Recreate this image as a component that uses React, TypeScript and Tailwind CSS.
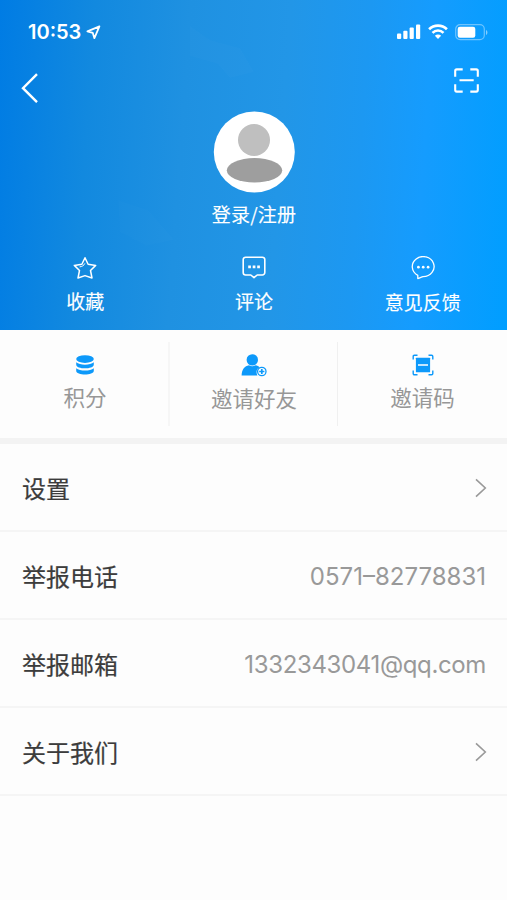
import type { ReactNode } from "react";

function StatusBar() {
  return (
    <div className="flex h-16 items-center pl-[28px] pr-[19px] text-white">
      <span className="font-['Inter',sans-serif] text-[20px] font-semibold leading-6">10:53</span>
      <svg className="ml-[5px]" width="15" height="15" viewBox="0 0 15 15" fill="none">
        <path d="M13.4 1.4 1.4 6.4 6.8 7.9 8.4 13.2Z" stroke="currentColor" strokeWidth="1.8" strokeLinejoin="round" />
      </svg>
      <div className="ml-auto flex items-center">
        <svg width="24" height="16" viewBox="0 0 24 16" fill="currentColor">
          <rect x="0" y="9.6" width="4.2" height="5.4" rx="1" />
          <rect x="6.3" y="6.8" width="4.2" height="8.2" rx="1" />
          <rect x="12.6" y="3.6" width="4.2" height="11.4" rx="1" />
          <rect x="19" y="0.4" width="4.2" height="14.6" rx="1" />
        </svg>
        <svg className="ml-[7px]" width="20" height="16" viewBox="0 0 20 16" fill="none" stroke="currentColor">
          <path d="M1.1 5.2a12.7 12.7 0 0 1 17.8 0" strokeWidth="2.7" />
          <path d="M4.5 8.8a7.8 7.8 0 0 1 11 0" strokeWidth="2.6" />
          <path d="M10 15 6.9 11.8a4.4 4.4 0 0 1 6.2 0Z" fill="currentColor" stroke="none" />
        </svg>
        <svg className="ml-[7px]" width="33" height="17" viewBox="0 0 33 17" fill="none">
          <rect x="0.7" y="0.7" width="28.6" height="15" rx="4.4" stroke="currentColor" strokeOpacity="0.4" strokeWidth="1.2" />
          <rect x="2.7" y="2.7" width="17.6" height="11" rx="2.2" fill="currentColor" />
          <path d="M31 5.9v5c1.9-.8 1.9-4.2 0-5Z" fill="currentColor" fillOpacity="0.5" />
        </svg>
      </div>
    </div>
  );
}

// Faint world-map texture over the header gradient
function HeaderTexture() {
  return (
    <svg className="absolute inset-0" width="507" height="330" viewBox="0 0 507 330" fill="#fff">
      <path d="M190 26l20 14 30 8 14 24-24 6-12-14-28-8Z" fillOpacity="0.015" />
      <path d="M118 200l30 10 26 30-28 6-26-14Z" fillOpacity="0.01" />
    </svg>
  );
}

function StarIcon() {
  return (
    <svg width="24" height="24" viewBox="0 0 24 24" fill="none" stroke="currentColor" strokeWidth="1.5" strokeLinejoin="round">
      <path d="M12 1.7 15.1 8.3 22.7 9.4 17.5 14.5 19 22 12 19.6 5 22 6.5 14.5 1.3 9.4 8.9 8.3Z" />
      <path d="M6.6 10.9c2.4-.3 4.3-1.3 5.3-3.5" strokeWidth="1" />
    </svg>
  );
}

function CommentIcon() {
  return (
    <svg width="24" height="24" viewBox="0 0 24 24" fill="none" stroke="currentColor" strokeWidth="1.6" strokeLinejoin="round">
      <path d="M3.6 1.2h16.8a2.4 2.4 0 0 1 2.4 2.4v13a2.4 2.4 0 0 1-2.4 2.4h-5.2L12 21.6l-3.2-2.6H3.6a2.4 2.4 0 0 1-2.4-2.4v-13a2.4 2.4 0 0 1 2.4-2.4Z" />
      <path d="M6.2 9.500h2.700v2.700H6.200zM10.700 9.500h2.700v2.700h-2.700zM15.200 9.500h2.700v2.700h-2.700z" fill="currentColor" stroke="none" />
    </svg>
  );
}

function FeedbackIcon() {
  return (
    <svg width="24" height="24" viewBox="0 0 24 24" fill="none" stroke="currentColor" strokeWidth="1.3" strokeLinejoin="round">
      <path d="M6.8 22.6V19.3A10.9 10 0 1 1 12 20.6C10.4 21.1 8.8 21.8 6.8 22.6Z" />
      <g fill="currentColor" stroke="none">
        <circle cx="7.4" cy="11.2" r="1.35" />
        <circle cx="12.2" cy="11.2" r="1.35" />
        <circle cx="17.1" cy="11.2" r="1.35" />
      </g>
    </svg>
  );
}

function CoinsIcon() {
  return (
    <svg width="18" height="20" viewBox="0 0 18 20" fill="currentColor">
      <ellipse cx="9" cy="4.1" rx="8.8" ry="3.9" />
      <path d="M.2 7.3C3.8 10.4 14.2 10.4 17.8 7.3v2.1c0 5.2-17.6 5.2-17.6 0Z" />
      <path d="M.2 13.2C3.8 16.3 14.2 16.3 17.8 13.2v2.5c0 5.1-17.6 5.1-17.6 0Z" />
    </svg>
  );
}

function InviteIcon() {
  return (
    <svg width="26" height="23" viewBox="0 0 26 23">
      <circle cx="11.3" cy="5.9" r="5.7" fill="currentColor" />
      <path d="M.6 21.5C.9 15.3 3.6 12.2 8 11.3c1.8 1.4 4.6 1.4 6.5 0 1.8.4 3.1 1 4 2-3.2 1.8-3.6 5-2.1 8.2Z" fill="currentColor" />
      <circle cx="20.8" cy="17.5" r="4.2" fill="#fff" stroke="currentColor" strokeWidth="1.3" />
      <path d="M20.8 14.9v5.2M18.2 17.5h5.2" stroke="currentColor" strokeWidth="1.7" />
    </svg>
  );
}

function CodeIcon() {
  return (
    <svg width="22" height="22" viewBox="0 0 22 22" fill="none" stroke="currentColor" strokeWidth="1.4">
      <path d="M1.2 5.5V2.4Q1.2 1.2 2.4 1.2H5.5M16.5 1.2h3.1q1.2 0 1.2 1.2v3.1M20.8 16.5v3.1q0 1.2-1.2 1.2h-3.1M5.5 20.8H2.4q-1.2 0-1.2-1.2v-3.1" />
      <rect x="3.9" y="3.7" width="14.2" height="14.6" rx="0.6" fill="currentColor" stroke="none" />
      <path d="M6 11h10" stroke="#fff" strokeWidth="1.5" />
    </svg>
  );
}

function Chevron() {
  return (
    <svg className="mt-[2px]" width="12" height="20" viewBox="0 0 12 20" fill="none" stroke="#999" strokeWidth="1.6">
      <path d="M1 1.3 10.3 10 1 18.7" />
    </svg>
  );
}

function Shortcut({ icon, label, labelClass = "mt-[9px]" }: { icon: ReactNode; label: string; labelClass?: string }) {
  return (
    <div className="flex flex-1 flex-col items-center">
      <div className="flex h-6">{icon}</div>
      <span className={`text-[19px] leading-6 [-webkit-text-stroke:0.15px] ${labelClass}`}>{label}</span>
    </div>
  );
}

function Tab({ icon, label, labelClass = "mt-0" }: { icon: ReactNode; label: string; labelClass?: string }) {
  return (
    <div className="flex flex-1 flex-col items-center pt-[8px]">
      <div className="flex h-[30px] items-center text-[#0d99fa]">{icon}</div>
      <span className={`text-[21.5px] leading-[34px] text-[#979797] ${labelClass}`}>{label}</span>
    </div>
  );
}

function Row({ label, value, valueClass = "" }: { label: string; value?: string; valueClass?: string }) {
  return (
    <div className="flex h-[88px] items-center justify-between border-b-2 border-[#f5f5f5] pl-[22px] pr-[20px]">
      <span className="pt-px text-[24px] leading-8 text-[#3c3c3c] [-webkit-text-stroke:0.2px]">{label}</span>
      {value ? (
        <span className={`pr-px pt-[4px] font-['Inter',sans-serif] text-[24px] leading-8 text-[#999] ${valueClass}`}>{value}</span>
      ) : (
        <Chevron />
      )}
    </div>
  );
}

export default function App() {
  return (
    <div className="h-[900px] w-[507px] overflow-hidden bg-[#fdfdfd] font-['Noto_Sans_CJK_SC',sans-serif]">
      <header className="relative h-[330px] bg-[linear-gradient(94deg,#007ce4_0%,#1289df_18%,#1f91e1_36%,#2296e7_55%,#1c98f2_70%,#159cfe_82%,#009eff_100%)]">
        <HeaderTexture />
        <div className="relative text-white">
          <StatusBar />
          <div className="flex h-[47px] items-start justify-between pl-[21px] pr-[27px]">
            <svg className="mt-[9px]" width="18" height="30" viewBox="0 0 18 30" fill="none" stroke="currentColor" strokeWidth="2.4">
              <path d="M16 1.2 2 15.2 16 29.2" />
            </svg>
            <svg className="mt-[3px]" width="27" height="27" viewBox="0 0 27 27" fill="none" stroke="currentColor" strokeWidth="2.1">
              <path d="M2.2 9.8V3.9q0-1.5 1.5-1.5h6M17.3 2.4h6q1.5 0 1.5 1.5v5.9M24.8 17.2v5.9q0 1.5-1.5 1.5h-6M9.7 24.6h-6q-1.5 0-1.5-1.5v-5.9M6.5 13.2h14.2" />
            </svg>
          </div>
          <div className="flex flex-col items-center">
            <svg width="82" height="82" viewBox="0 0 82 82">
              <circle cx="41.3" cy="41" r="40.5" fill="#fff" />
              <circle cx="41" cy="29" r="16" fill="#bfbfbf" />
              <ellipse cx="41.5" cy="59.3" rx="27.7" ry="12.2" fill="#9e9e9e" />
            </svg>
            <span className="mt-[9px] pl-px text-[19px] leading-6 tracking-[0.2px] [-webkit-text-stroke:0.15px]">登录/注册</span>
          </div>
          <div className="mt-[30px] flex pl-px">
            <Shortcut icon={<StarIcon />} label="收藏" />
            <Shortcut icon={<CommentIcon />} label="评论" />
            <Shortcut icon={<FeedbackIcon />} label="意见反馈" labelClass="mt-[10px]" />
          </div>
        </div>
      </header>

      <section className="flex h-[108px] py-[12px]">
        <div className="flex w-[170px] border-r-2 border-[#f6f6f6] pl-[2px]">
          <Tab icon={<CoinsIcon />} label="积分" />
        </div>
        <div className="flex w-[168px] border-r border-[#f0f0f0] pl-px">
          <Tab icon={<InviteIcon />} label="邀请好友" labelClass="mt-px" />
        </div>
        <div className="flex flex-1">
          <Tab icon={<CodeIcon />} label="邀请码" />
        </div>
      </section>
      <div className="h-[6px] bg-[#f3f3f3]" />

      <Row label="设置" />
      <Row label="举报电话" value="0571–82778831" />
      <Row label="举报邮箱" value="1332343041@qq.com" valueClass="tracking-[-0.36px]" />
      <Row label="关于我们" />
    </div>
  );
}
